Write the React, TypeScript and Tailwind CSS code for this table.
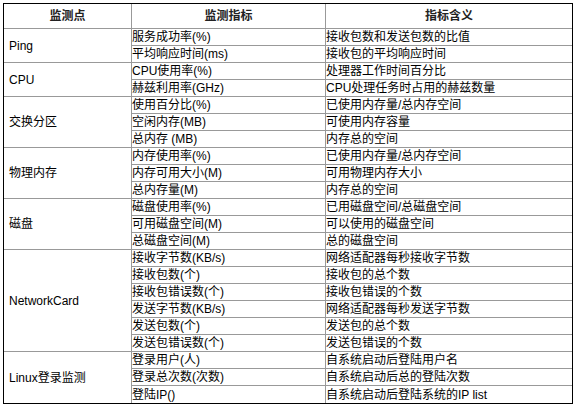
const groups: { name: string; rows: [string, string][] }[] = [
  {
    name: "Ping",
    rows: [
      ["服务成功率(%)", "接收包数和发送包数的比值"],
      ["平均响应时间(ms)", "接收包的平均响应时间"],
    ],
  },
  {
    name: "CPU",
    rows: [
      ["CPU使用率(%)", "处理器工作时间百分比"],
      ["赫兹利用率(GHz)", "CPU处理任务时占用的赫兹数量"],
    ],
  },
  {
    name: "交换分区",
    rows: [
      ["使用百分比(%)", "已使用内存量/总内存空间"],
      ["空闲内存(MB)", "可使用内存容量"],
      ["总内存 (MB)", "内存总的空间"],
    ],
  },
  {
    name: "物理内存",
    rows: [
      ["内存使用率(%)", "已使用内存量/总内存空间"],
      ["内存可用大小(M)", "可用物理内存大小"],
      ["总内存量(M)", "内存总的空间"],
    ],
  },
  {
    name: "磁盘",
    rows: [
      ["磁盘使用率(%)", "已用磁盘空间/总磁盘空间"],
      ["可用磁盘空间(M)", "可以使用的磁盘空间"],
      ["总磁盘空间(M)", "总的磁盘空间"],
    ],
  },
  {
    name: "NetworkCard",
    rows: [
      ["接收字节数(KB/s)", "网络适配器每秒接收字节数"],
      ["接收包数(个)", "接收包的总个数"],
      ["接收包错误数(个)", "接收包错误的个数"],
      ["发送字节数(KB/s)", "网络适配器每秒发送字节数"],
      ["发送包数(个)", "发送包的总个数"],
      ["发送包错误数(个)", "发送包错误的个数"],
    ],
  },
  {
    name: "Linux登录监测",
    rows: [
      ["登录用户(人)", "自系统启动后登陆用户名"],
      ["登录总次数(次数)", "自系统启动后总的登陆次数"],
      ["登陆IP()", "自系统启动后登陆系统的IP list"],
    ],
  },
];

export default function App() {
  return (
    <div className="bg-white w-[582px] h-[404px] pt-[3px] pl-[3px] font-['Liberation_Sans','Noto_Sans_CJK_SC',sans-serif] text-[12px] text-black">
      <div className="w-[570px] border border-black">
        <table className="w-full table-fixed border-separate border-spacing-0">
          <thead>
            <tr className="h-[25px]">
              <th className="w-[128px] border-r border-b border-[#999] font-bold text-[#222] leading-[24px]">监测点</th>
              <th className="w-[194px] border-r border-b border-[#999] font-bold text-[#222] leading-[24px]">监测指标</th>
              <th className="border-b border-[#999] font-bold text-[#222] leading-[24px]">指标含义</th>
            </tr>
          </thead>
          <tbody>
            {groups.map((g, gi) =>
              g.rows.map((r, ri) => {
                const last = gi === groups.length - 1 && ri === g.rows.length - 1;
                const rb = last ? "" : "border-b";
                return (
                  <tr key={g.name + ri} className="h-[17px]">
                    {ri === 0 && (
                      <td
                        rowSpan={g.rows.length}
                        className={`pl-[5px] align-middle border-r border-[#999] ${gi === groups.length - 1 ? "" : "border-b"}`}
                      >
                        {g.name}
                      </td>
                    )}
                    <td className={`p-0 pt-px leading-[15px] whitespace-nowrap border-r border-[#999] ${rb}`}>{r[0]}</td>
                    <td className={`p-0 pt-px leading-[15px] whitespace-nowrap border-[#999] ${rb}`}>{r[1]}</td>
                  </tr>
                );
              })
            )}
          </tbody>
        </table>
      </div>
    </div>
  );
}
